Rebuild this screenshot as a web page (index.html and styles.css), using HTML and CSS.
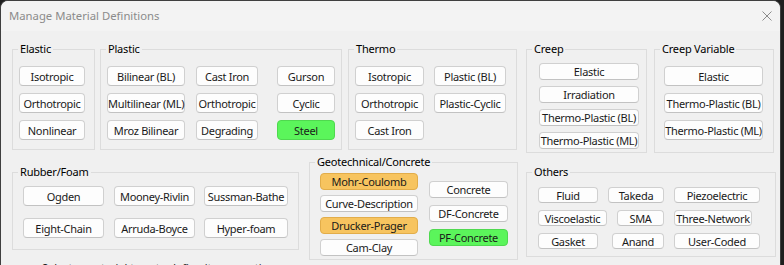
FILE: index.html
```html
<!DOCTYPE html>
<html lang="en">
<head>
    <meta charset="UTF-8">
    <meta name="viewport" content="width=device-width, initial-scale=1.0">
    <title>Manage Material Definitions</title>
    <link rel="stylesheet" href="styles.css">
</head>
<body>
    <div class="window">
        <div class="titlebar">
            <span class="title">Manage Material Definitions</span>
            <svg class="close" width="10" height="10" viewBox="0 0 10 10">
                <path d="M0.5 0.5 L9.5 9.5 M9.5 0.5 L0.5 9.5" stroke="#8b8b8b" stroke-width="1" fill="none"/>
            </svg>
        </div>

        <div class="content">
            <!-- Top row of groups -->
            <div class="row row-top">
                <fieldset class="group elastic">
                    <legend>Elastic</legend>
                    <div class="group-body">
                        <div class="col">
                            <button class="btn">Isotropic</button>
                            <button class="btn">Orthotropic</button>
                            <button class="btn">Nonlinear</button>
                        </div>
                    </div>
                </fieldset>

                <fieldset class="group plastic">
                    <legend>Plastic</legend>
                    <div class="group-body">
                        <div class="col">
                            <button class="btn">Bilinear (BL)</button>
                            <button class="btn">Multilinear (ML)</button>
                            <button class="btn">Mroz Bilinear</button>
                        </div>
                        <div class="col">
                            <button class="btn">Cast Iron</button>
                            <button class="btn">Orthotropic</button>
                            <button class="btn">Degrading</button>
                        </div>
                        <div class="col">
                            <button class="btn">Gurson</button>
                            <button class="btn">Cyclic</button>
                            <button class="btn btn-green">Steel</button>
                        </div>
                    </div>
                </fieldset>

                <fieldset class="group thermo">
                    <legend>Thermo</legend>
                    <div class="group-body">
                        <div class="col">
                            <button class="btn">Isotropic</button>
                            <button class="btn">Orthotropic</button>
                            <button class="btn">Cast Iron</button>
                        </div>
                        <div class="col">
                            <button class="btn">Plastic (BL)</button>
                            <button class="btn">Plastic-Cyclic</button>
                        </div>
                    </div>
                </fieldset>

                <fieldset class="group creep">
                    <legend>Creep</legend>
                    <div class="group-body">
                        <div class="col">
                            <button class="btn">Elastic</button>
                            <button class="btn">Irradiation</button>
                            <button class="btn">Thermo-Plastic (BL)</button>
                            <button class="btn">Thermo-Plastic (ML)</button>
                        </div>
                    </div>
                </fieldset>

                <fieldset class="group creep-var">
                    <legend>Creep Variable</legend>
                    <div class="group-body">
                        <div class="col">
                            <button class="btn">Elastic</button>
                            <button class="btn">Thermo-Plastic (BL)</button>
                            <button class="btn">Thermo-Plastic (ML)</button>
                        </div>
                    </div>
                </fieldset>
            </div>

            <!-- Bottom row of groups -->
            <div class="row row-bottom">
                <fieldset class="group rubber">
                    <legend>Rubber/Foam</legend>
                    <div class="group-body">
                        <div class="col">
                            <button class="btn">Ogden</button>
                            <button class="btn">Eight-Chain</button>
                        </div>
                        <div class="col">
                            <button class="btn">Mooney-Rivlin</button>
                            <button class="btn">Arruda-Boyce</button>
                        </div>
                        <div class="col">
                            <button class="btn">Sussman-Bathe</button>
                            <button class="btn">Hyper-foam</button>
                        </div>
                    </div>
                </fieldset>

                <fieldset class="group geotech">
                    <legend>Geotechnical/Concrete</legend>
                    <div class="group-body">
                        <div class="col">
                            <button class="btn btn-orange">Mohr-Coulomb</button>
                            <button class="btn">Curve-Description</button>
                            <button class="btn btn-orange">Drucker-Prager</button>
                            <button class="btn">Cam-Clay</button>
                        </div>
                        <div class="col">
                            <button class="btn">Concrete</button>
                            <button class="btn">DF-Concrete</button>
                            <button class="btn btn-green">PF-Concrete</button>
                        </div>
                    </div>
                </fieldset>

                <fieldset class="group others">
                    <legend>Others</legend>
                    <div class="group-body">
                        <button class="btn w60">Fluid</button>
                        <button class="btn w56">Takeda</button>
                        <button class="btn w86">Piezoelectric</button>
                        <button class="btn w69">Viscoelastic</button>
                        <button class="btn w47">SMA</button>
                        <button class="btn w78">Three-Network</button>
                        <button class="btn w60">Gasket</button>
                        <button class="btn w52">Anand</button>
                        <button class="btn w86">User-Coded</button>
                    </div>
                </fieldset>
            </div>

            <div class="hint">Select a material type to define its properties</div>
        </div>
    </div>
</body>
</html>
```

FILE: styles.css
```css
/* Dialog base */
body {
    margin: 0;
    background: #1e1e1e;
    font-family: 'Segoe UI', 'Noto Sans', sans-serif;
    font-size: 11px;
    color: #000;
    overflow: hidden;
    height: 265px;
}

.window {
    width: 779px;
    height: 300px;
    background: #f0f0f0;
    border: 1px solid #3f3f3f;
    border-bottom: none;
    border-radius: 8px 8px 0 0;
    overflow: hidden;
}

.titlebar {
    height: 30px;
    background: #f3f3f3;
    display: flex;
    align-items: center;
    justify-content: space-between;
    padding: 0 8px 0 8px;
}

.title {
    color: #8b8b8b;
    font-size: 11.3px;
    line-height: 30px;
}

.close {
    margin-top: -1px;
}

.content {
    padding: 10px 0 0 11px;
}

.row {
    display: flex;
    align-items: flex-start;
}

/* Group boxes */
.group {
    margin: 0;
    padding: 0;
    border: 1px solid #dcdcdc;
    min-width: 0;
    box-sizing: border-box;
}

.group legend {
    padding: 0 2px;
    margin-left: 5px;
    font-size: 11px;
    letter-spacing: -0.2px;
    line-height: 16px;
    color: #000;
}

.group-body {
    display: flex;
    align-items: flex-start;
}

.col {
    display: flex;
    flex-direction: column;
}

/* Buttons */
.btn {
    font-family: inherit;
    font-size: 11px;
    letter-spacing: -0.3px;
    color: #1a1a1a;
    background: #fdfdfd;
    border: 1px solid #d0d0d0;
    border-bottom-color: #c2c2c2;
    border-radius: 4px;
    padding: 0;
    height: 20px;
    line-height: 17px;
    white-space: nowrap;
    box-sizing: border-box;
    cursor: pointer;
}

.btn-green {
    background: #5bf55b;
    border-color: #4fd94f;
}

.btn-orange {
    background: #f7c45f;
    border-color: #e2ad4a;
}

/* Top row */
.elastic { width: 83px; }
.plastic { width: 242px; margin-left: 5px; }
.thermo { width: 169px; margin-left: 6px; }
.creep { width: 121px; margin-left: 9px; }
.creep-var { width: 120px; margin-left: 7px; }

.elastic .group-body,
.plastic .group-body,
.thermo .group-body {
    padding: 9px 0 9px 6px;
}

.elastic .col,
.plastic .col,
.thermo .col,
.creep-var .col {
    gap: 7px;
}

.elastic .col { width: 66px; }

.plastic .col:nth-child(1) { width: 78px; }
.plastic .col:nth-child(2) { width: 62px; margin-left: 11px; }
.plastic .col:nth-child(3) { width: 58px; margin-left: 19px; }

.thermo .col:nth-child(1) { width: 69px; }
.thermo .col:nth-child(2) { width: 72px; margin-left: 10px; }

.creep .group-body { padding: 6px 0 3px 12px; }
.creep .col { width: 100px; gap: 6px; }
.creep .btn { height: 17px; line-height: 14px; }

.creep-var .group-body { padding: 9px 0 12px 9px; }
.creep-var .col { width: 99px; }

/* Bottom row */
.row-bottom { margin-top: 1px; }

.rubber { width: 287px; margin-top: 10px; }
.geotech { width: 209px; margin-left: 10px; }
.others { width: 250px; margin-left: 8px; margin-top: 10px; }

.rubber .group-body { padding: 6px 0 11px 10px; }
.rubber .col { gap: 12px; }
.rubber .col:nth-child(1) { width: 81px; }
.rubber .col:nth-child(2) { width: 81px; margin-left: 10px; }
.rubber .col:nth-child(3) { width: 84px; margin-left: 9px; }

.geotech .group-body { padding: 3px 0 3px 10px; }
.geotech .btn { height: 17px; line-height: 14px; }
.geotech .col:nth-child(1) { width: 98px; gap: 5px; }
.geotech .col:nth-child(2) { width: 79px; gap: 7px; margin-left: 11px; margin-top: 8px; }

.others .group-body {
    display: grid;
    grid-template-columns: 69px 67px 86px;
    row-gap: 7px;
    padding: 7px 0 7px 11px;
}

.others .btn { height: 16px; line-height: 13px; }
.others .btn:nth-child(3n+2) { justify-self: end; margin-right: 10px; }

.w47 { width: 47px; }
.w52 { width: 52px; }
.w56 { width: 56px; }
.w60 { width: 60px; }
.w69 { width: 69px; }
.w78 { width: 78px; }
.w86 { width: 86px; }

.hint {
    padding: 0 0 0 30px;
    line-height: 16px;
    color: #1a1a1a;
}
```
